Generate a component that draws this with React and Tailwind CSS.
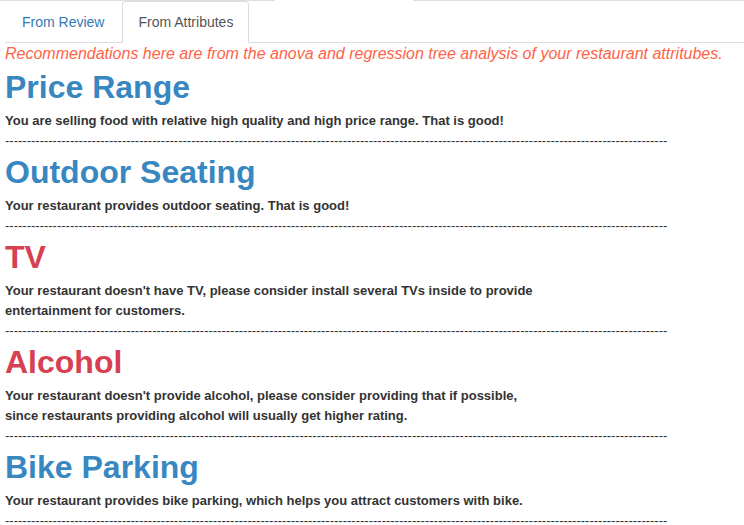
import React from "react";

const DASHES = "-".repeat(153);

const sections = [
  { title: "Price Range", color: "text-[#3987c0]", lines: ["You are selling food with relative high quality and high price range. That is good!"] },
  { title: "Outdoor Seating", color: "text-[#3987c0]", lines: ["Your restaurant provides outdoor seating. That is good!"] },
  { title: "TV", color: "text-[#d74052]", lines: ["Your restaurant doesn't have TV, please consider install several TVs inside to provide", "entertainment for customers."] },
  { title: "Alcohol", color: "text-[#d74052]", lines: ["Your restaurant doesn't provide alcohol, please consider providing that if possible,", "since restaurants providing alcohol will usually get higher rating."] },
  { title: "Bike Parking", color: "text-[#3987c0]", lines: ["Your restaurant provides bike parking, which helps you attract customers with bike."] },
];

export default function App() {
  return (
    <div className="w-[744px] h-[525px] overflow-hidden bg-white font-['Liberation_Sans',Arial,sans-serif] text-[#333]">
      <div className="flex h-px">
        <div className="w-[275px] bg-[#dddddd]" />
        <div className="w-[138px]" />
        <div className="flex-1 bg-[#dddddd]" />
      </div>
      <ul className="ml-[5px] flex border-b border-[#dddddd] text-[14px] leading-[20px]">
        <li className="-mb-px ml-px mr-[2px]">
          <a className="block px-[15px] py-[10px] border border-transparent rounded-t text-[#337ab7]">From Review</a>
        </li>
        <li className="-mb-px">
          <a className="block px-[15px] py-[10px] border border-[#dddddd] border-b-white bg-white rounded-t text-[#555555]">From Attributes</a>
        </li>
      </ul>
      <div className="px-[5px]">
        <p className="mt-px italic text-[16px] leading-[20px] text-[#ff6347] whitespace-nowrap">
          Recommendations here are from the anova and regression tree analysis of your restaurant attritubes.
        </p>
        {sections.map((s, i) => (
          <div key={i} className={i === 0 ? "mt-[5px]" : "mt-[3px]"}>
            <h1 className={`text-[32px] leading-[36px] font-bold whitespace-nowrap ${s.color}`}>{s.title}</h1>
            <div className="mt-[6px] text-[13px] leading-[20px] font-bold whitespace-nowrap">
              {s.lines.map((l, j) => (
                <div key={j}>{l}</div>
              ))}
              <div className="font-normal">{DASHES}</div>
            </div>
          </div>
        ))}
      </div>
    </div>
  );
}
